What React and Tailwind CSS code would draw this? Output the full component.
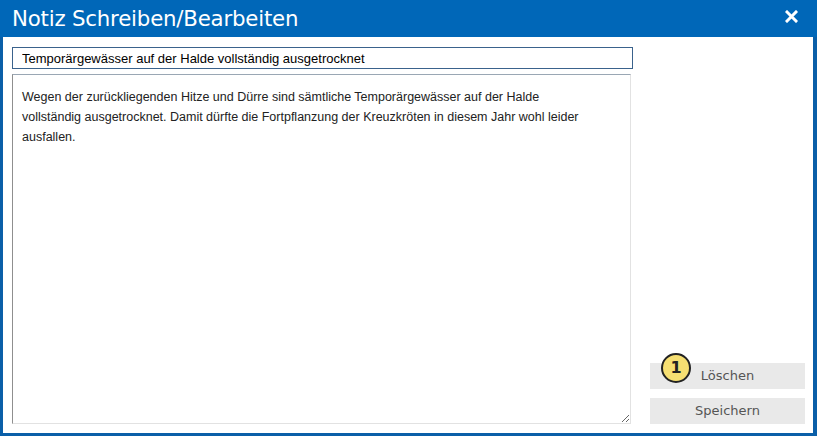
export default function App() {
  return (
    <div className="w-[817px] h-[436px] bg-[#0a5fa8] overflow-hidden flex flex-col">
      {/* title bar */}
      <div className="h-[37px] shrink-0 bg-[#0067b8] flex items-center justify-between pl-[12px] pr-[19px]">
        <h1 className="text-white text-[21.3px] leading-none font-['DejaVu_Sans',Verdana,sans-serif] tracking-[-0.2px]">
          Notiz Schreiben/Bearbeiten
        </h1>
        <svg width="13" height="13" viewBox="0 0 13 13" className="mt-[-4px]">
          <path d="M2 2 L11 11 M11 2 L2 11" stroke="white" strokeWidth="3" strokeLinecap="square" />
        </svg>
      </div>

      <div className="flex-1 flex ml-[3px] mr-[4px] mb-[3px] bg-white">
        <div className="flex flex-col pl-[9px] pt-[10px] pb-[9px] w-[630px]">
          <input
            defaultValue="Temporärgewässer auf der Halde vollständig ausgetrocknet"
            className="w-[621px] h-[22px] border border-[#3a628c] px-[9px] text-[13px] text-black font-['Liberation_Sans',Arial,sans-serif] outline-none"
          />
          <textarea
            defaultValue={
              "Wegen der zurückliegenden Hitze und Dürre sind sämtliche Temporärgewässer auf der Halde vollständig ausgetrocknet. Damit dürfte die Fortpflanzung der Kreuzkröten in diesem Jahr wohl leider ausfallen."
            }
            className="mt-[5px] w-[619px] flex-1 border border-[#e2e2e2] border-t-[#9aa7b4] border-l-[#8f8f8f] pl-[9px] pr-[44px] pt-[12px] text-[12.5px] leading-[20px] text-[#222] font-['Liberation_Sans',Arial,sans-serif] outline-none resize-y"
          />
        </div>

        <div className="flex-1 flex flex-col justify-end items-start pl-[17px] pb-[9px]">
          <div className="relative">
            <button className="w-[155px] h-[26px] bg-[#e9e9e9] text-[#555] text-[13px] font-['DejaVu_Sans',Verdana,sans-serif]">
              Löschen
            </button>
            <span className="absolute left-[11px] top-[-9px] w-[30px] h-[30px] rounded-full bg-[#f6df72] border-2 border-[#222] flex items-center justify-center text-[16px] font-bold text-[#222] font-['DejaVu_Sans',Verdana,sans-serif]">
              1
            </span>
          </div>
          <button className="mt-[9px] w-[155px] h-[26px] bg-[#e9e9e9] text-[#555] text-[13px] font-['DejaVu_Sans',Verdana,sans-serif]">
            Speichern
          </button>
        </div>
      </div>
    </div>
  );
}
